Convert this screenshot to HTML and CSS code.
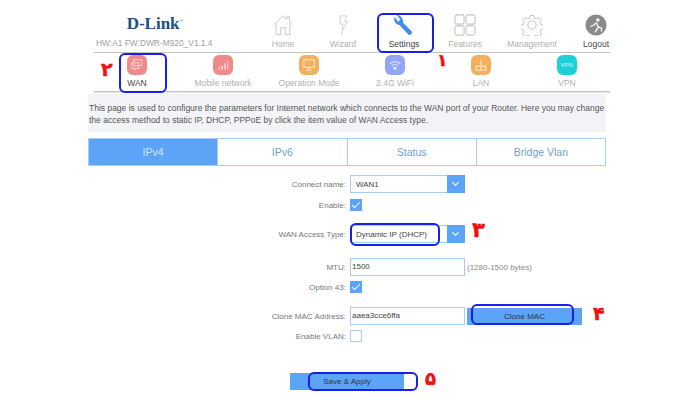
FILE: index.html
```html
<!DOCTYPE html>
<html lang="en">
<head>
    <meta charset="UTF-8">
    <title>D-Link DWR-M920 WAN Settings</title>
    <link rel="stylesheet" href="styles.css">
</head>
<body>
    <div class="page">
        <div class="top-nav">
            <div class="brand">
                <div class="logo">D-Link<sup class="logo-reg">®</sup></div>
                <div class="version">HW:A1 FW:DWR-M920_V1.1.4</div>
            </div>
            <div class="top-item item-home">
                <svg class="top-icon" viewBox="0 0 24 24" fill="none" stroke="#c4c4c4" stroke-width="1">
                    <path d="M1.500 12 12 2l4 3.800V3h3v5.600L22.500 12"/>
                    <path d="M4.500 10v12.500h5V15h5v7.500h5V10"/>
                </svg>
                <span>Home</span>
            </div>
            <div class="top-item item-wizard">
                <svg class="top-icon" viewBox="0 0 24 24" fill="none" stroke="#cdcdcd" stroke-width="1">
                    <path d="M9 2h7l-2 6h3l-6 10 1-7H9z"/>
                    <path d="M11 19v4"/>
                </svg>
                <span>Wizard</span>
            </div>
            <div class="top-item item-settings">
                <svg class="top-icon" viewBox="0 0 24 24" fill="#3f8fe6">
                    <path d="M2 3c-2 4 .5 8.500 5 9l10 10.500c1.500 1.200 4.500-1.500 3.500-3.500L11 9.500C11.500 5 8 .5 4 1l4 5-2.500 2.500z"/>
                </svg>
                <span class="top-active">Settings</span>
            </div>
            <div class="top-item item-features">
                <svg class="top-icon" viewBox="0 0 24 24" fill="none" stroke="#c6c6c6" stroke-width="1.200">
                    <rect x="1" y="1" width="10" height="10" rx="2"/>
                    <rect x="13" y="1" width="10" height="10" rx="2"/>
                    <rect x="1" y="13" width="10" height="10" rx="2"/>
                    <rect x="13" y="13" width="10" height="10" rx="2"/>
                </svg>
                <span>Features</span>
            </div>
            <div class="top-item item-management">
                <svg class="top-icon" viewBox="0 0 24 24" fill="none" stroke="#bdbdbd" stroke-width="1">
                    <circle cx="12" cy="12" r="4.500"/>
                    <path d="M10 1.500h4l.6 3 2.400 1 2.600-1.700 2.800 2.800-1.700 2.600 1 2.400 2.800.6v4l-2.800.6-1 2.400 1.700 2.600-2.800 2.800-2.600-1.700-2.400 1-.6 2.800h-4l-.6-2.800-2.400-1-2.600 1.700-2.800-2.800 1.700-2.600-1-2.400-2.800-.6v-4l2.800-.6 1-2.400-1.700-2.600 2.800-2.800 2.600 1.700 2.400-1z"/>
                </svg>
                <span>Management</span>
            </div>
            <div class="top-item item-logout">
                <svg class="top-icon" viewBox="0 0 24 24">
                    <circle cx="12" cy="12" r="11.500" fill="#8a8a8a"/>
                    <circle cx="14" cy="6.500" r="2" fill="#f2f2f2"/>
                    <path d="M12.500 9.500 9 12.500l-3 1M12.500 9.500l2 4.500-3.500 6M14.500 14l3.500 1.500v3.500" fill="none" stroke="#f2f2f2" stroke-width="1.600"/>
                </svg>
                <span class="top-active">Logout</span>
            </div>
        </div>

        <div class="sub-nav">
            <div class="sub-item">
                <div class="sub-icon icon-red">
                    <svg viewBox="0 0 12 12" fill="none" stroke="#f6c9c9" stroke-width="1"><rect x="3" y="1.500" width="7" height="5"/><rect x="1.500" y="4" width="6" height="5"/><path d="M4 9.500v1.500"/></svg>
                </div>
                <span class="sub-active">WAN</span>
            </div>
            <div class="sub-item">
                <div class="sub-icon icon-red">
                    <svg viewBox="0 0 12 12" fill="#f6c9c9"><rect x="2" y="8" width="1.500" height="2"/><rect x="4.500" y="6.500" width="1.500" height="3.500"/><rect x="7" y="4.500" width="1.500" height="5.500"/><rect x="9.500" y="2.500" width="1" height="7.500"/></svg>
                </div>
                <span>Mobile network</span>
            </div>
            <div class="sub-item">
                <div class="sub-icon icon-orange">
                    <svg viewBox="0 0 12 12" fill="none" stroke="#fbe3c2" stroke-width="1"><rect x="1.500" y="1.500" width="9" height="6.500"/><path d="M6 8v2.500M3.500 10.500h5"/></svg>
                </div>
                <span>Operation Mode</span>
            </div>
            <div class="sub-item">
                <div class="sub-icon icon-violet">
                    <svg viewBox="0 0 12 12" fill="none" stroke="#e3e7ff" stroke-width="1"><path d="M1.500 5a6.500 6.500 0 0 1 9 0M3.200 6.700a4 4 0 0 1 5.600 0"/><circle cx="6" cy="8.700" r=".9" fill="#e3e7ff"/></svg>
                </div>
                <span>2.4G WiFi</span>
            </div>
            <div class="sub-item">
                <div class="sub-icon icon-amber">
                    <svg viewBox="0 0 12 12" fill="none" stroke="#fbe3c2" stroke-width="1"><path d="M6 1.500v3M2 10V7h8v3M6 4.500V10M1 10.500h10"/></svg>
                </div>
                <span>LAN</span>
            </div>
            <div class="sub-item">
                <div class="sub-icon icon-teal"><span class="vpn-mark">VPN</span></div>
                <span>VPN</span>
            </div>
        </div>

        <div class="content">
            <p class="intro">This page is used to configure the parameters for Internet network which connects to the WAN port of your Router. Here you may change the access method to static IP, DHCP, PPPoE by click the item value of WAN Access type.</p>

            <div class="tabs">
                <div class="tab tab-active">IPv4</div>
                <div class="tab">IPv6</div>
                <div class="tab">Status</div>
                <div class="tab">Bridge Vlan</div>
            </div>

            <div class="form">
                <div class="row row-connect">
                    <label class="row-label">Connect name:</label>
                    <div class="select"><span>WAN1</span><i class="select-arrow"></i></div>
                </div>
                <div class="row row-enable">
                    <label class="row-label">Enable:</label>
                    <span class="check check-on"></span>
                </div>
                <div class="row row-access">
                    <label class="row-label">WAN Access Type:</label>
                    <div class="select"><span>Dynamic IP (DHCP)</span><i class="select-arrow"></i></div>
                </div>
                <div class="row row-mtu">
                    <label class="row-label">MTU:</label>
                    <div class="input">1500</div>
                    <span class="hint">(1280-1500 bytes)</span>
                </div>
                <div class="row row-option">
                    <label class="row-label">Option 43:</label>
                    <span class="check check-on"></span>
                </div>
                <div class="row row-clone">
                    <label class="row-label">Clone MAC Address:</label>
                    <div class="input">aaea3cce6ffa</div>
                    <div class="clone-btn">Clone MAC</div>
                </div>
                <div class="row row-vlan">
                    <label class="row-label">Enable VLAN:</label>
                    <span class="check"></span>
                </div>
                <div class="save-row">
                    <div class="save-btn">Save &amp; Apply</div>
                </div>
            </div>
        </div>
    </div>

    <!-- blue marker outlines and red step numbers drawn over the screenshot -->
    <div class="mark mark-settings"></div>
    <div class="mark mark-wan"></div>
    <div class="mark mark-access"></div>
    <div class="mark mark-clone"></div>
    <div class="mark mark-save"></div>
    <div class="step step-1">۱</div>
    <div class="step step-2">۲</div>
    <div class="step step-3">۳</div>
    <div class="step step-4">۴</div>
    <div class="step step-5">۵</div>
</body>
</html>
```

FILE: styles.css
```css
body {
    margin: 0;
    background-color: #fff;
    font-family: "Liberation Sans", Arial, sans-serif;
    font-size: 8.500px;
    color: #666;
    overflow: hidden;
}

.page {
    width: 700px;
    height: 400px;
    padding-top: 12px;
    box-sizing: border-box;
}

.top-nav {
    display: flex;
    width: 516px;
    height: 40px;
    margin-left: 94px;
    border-bottom: 1px solid #c4c4c4;
}

.brand {
    flex: none;
    width: 160px;
    padding-left: 2px;
    box-sizing: border-box;
}

.logo {
    width: 118px;
    height: 20px;
    text-align: center;
    font-family: "Liberation Serif", serif;
    font-weight: bold;
    font-size: 17px;
    line-height: 23px;
    color: #1d4f86;
}

.logo-reg {
    font-size: 5px;
    line-height: 0;
    color: #777;
}

.version {
    margin-top: 6px;
    font-size: 8.400px;
    line-height: 11px;
    color: #a0a0a0;
    white-space: nowrap;
}

.top-item {
    flex: none;
    display: flex;
    flex-direction: column;
    align-items: center;
    color: #b0b0b0;
    line-height: 11px;
    white-space: nowrap;
}

.top-icon {
    width: 22px;
    height: 22px;
    margin-top: 2px;
    margin-bottom: 3px;
}

.item-home { width: 60px; margin-left: -1px; }
.item-wizard { width: 60px; }
.item-settings { width: 62px; }
.item-features { width: 60px; }
.item-management { width: 74px; }
.item-logout { width: 54px; }

.top-active {
    color: #444;
}

.sub-nav {
    display: flex;
    width: 516px;
    height: 38px;
    margin-left: 94px;
    border-bottom: 1px solid #c4c4c4;
    box-shadow: 0 1px 0 #e6e6e6;
}

.sub-item {
    display: flex;
    flex-direction: column;
    align-items: center;
    width: 86px;
    padding-top: 2px;
    color: #b0b0b0;
    line-height: 11px;
    white-space: nowrap;
}

.sub-active {
    color: #444;
}

.sub-icon {
    display: flex;
    align-items: center;
    justify-content: center;
    width: 20px;
    height: 20px;
    margin-bottom: 3px;
    border-radius: 6px;
}

.sub-icon svg {
    width: 14px;
    height: 14px;
}

.icon-red { background-color: #f08a8a; }
.icon-orange { background-color: #f2b05c; }
.icon-violet { background-color: #93a6f5; }
.icon-amber { background-color: #f2b05c; }
.icon-teal { background-color: #1ed0d8; }

.vpn-mark {
    font-size: 6px;
    color: #d8f7f8;
}

.content {
    width: 518px;
    margin-left: 88px;
}

.intro {
    height: 30px;
    margin: 2px 0 6px;
    padding: 8px 0 0 1px;
    background-color: #f2f4f7;
    font-size: 8.500px;
    line-height: 12px;
    color: #555;
}

.tabs {
    display: flex;
    height: 26px;
    border: 1px solid #a9cdf0;
}

.tab {
    flex: 1;
    border-left: 1px solid #a9cdf0;
    text-align: center;
    font-size: 10.500px;
    line-height: 26px;
    color: #6d9fd6;
}

.tab:first-child {
    border-left: none;
}

.tab-active {
    background-color: #5ba4f8;
    color: #d4e6fb;
}

.form {
    padding-top: 9px;
}

.row {
    display: flex;
    align-items: center;
    height: 18px;
    font-size: 8px;
}

.row-label {
    width: 258px;
    text-align: right;
    margin-right: 4px;
    color: #777;
}

.row-enable { margin-top: 3px; }
.row-access { margin-top: 11px; }
.row-mtu { margin-top: 15px; }
.row-option { margin-top: 2px; }
.row-clone { margin-top: 11px; }
.row-vlan { margin-top: 2px; }

.select {
    display: flex;
    align-items: center;
    justify-content: space-between;
    box-sizing: border-box;
    width: 115px;
    height: 18px;
    padding-left: 5px;
    border: 1px solid #a9cdf0;
    color: #444;
}

.select-arrow {
    position: relative;
    width: 18px;
    height: 18px;
    margin-right: -1px;
    background-color: #5ba4f8;
}

.select-arrow::after {
    content: "";
    position: absolute;
    left: 6px;
    top: 5px;
    width: 4px;
    height: 4px;
    border-right: 1px solid #fff;
    border-bottom: 1px solid #fff;
    transform: rotate(45deg);
}

.input {
    box-sizing: border-box;
    width: 115px;
    height: 18px;
    padding-left: 1px;
    border: 1px solid #a9cdf0;
    line-height: 16px;
    color: #444;
}

.hint {
    margin-left: 2px;
    color: #888;
}

.check {
    position: relative;
    box-sizing: border-box;
    width: 12px;
    height: 12px;
    border: 1px solid #a9cdf0;
}

.check-on {
    background-color: #5ba4f8;
    border-color: #5ba4f8;
}

.check-on::after {
    content: "";
    position: absolute;
    left: 3px;
    top: 0;
    width: 3px;
    height: 7px;
    border-right: 1px solid #fff;
    border-bottom: 1px solid #fff;
    transform: rotate(45deg);
}

.clone-btn {
    width: 115px;
    height: 17px;
    margin-left: 2px;
    box-sizing: border-box;
    background-color: #5ba4f8;
    text-align: center;
    line-height: 17px;
    color: #333;
}

.save-row {
    margin-top: 28px;
    padding-left: 202px;
}

.save-btn {
    width: 114px;
    height: 17px;
    background-color: #5ba4f8;
    text-align: center;
    font-size: 8px;
    line-height: 17px;
    color: #333;
}

/* markers */
.mark {
    position: absolute;
    box-sizing: border-box;
    border: 2px solid #1a1ee6;
    border-radius: 6px;
}

.mark-settings { left: 377px; top: 13px; width: 57px; height: 40px; }
.mark-wan { left: 119px; top: 53px; width: 48px; height: 40px; }
.mark-access { left: 350px; top: 223px; width: 90px; height: 23px; }
.mark-clone { left: 471px; top: 304px; width: 103px; height: 21px; }
.mark-save { left: 308px; top: 372px; width: 110px; height: 19px; }

.step {
    position: absolute;
    font-family: "DejaVu Sans", sans-serif;
    font-weight: bold;
    line-height: 1;
    color: #ee1111;
    -webkit-text-stroke: 0.500px #ee1111;
}

.step-1 { left: 437px; top: 52px; font-size: 17px; }
.step-2 { left: 101px; top: 60px; font-size: 19px; }
.step-3 { left: 472px; top: 220px; font-size: 21px; }
.step-4 { left: 593px; top: 304px; font-size: 19px; }
.step-5 { left: 425px; top: 370px; font-size: 18px; }
```
